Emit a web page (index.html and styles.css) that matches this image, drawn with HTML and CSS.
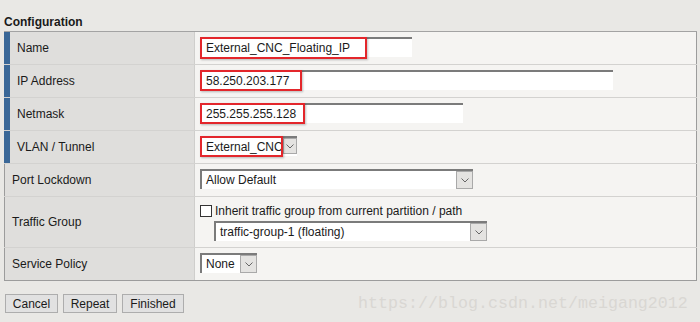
FILE: index.html
```
<!DOCTYPE html>
<html>
<head>
    <title>Configuration</title>
    <link rel="stylesheet" href="styles.css">
</head>
<body>
    <div class="title">Configuration</div>

    <div class="config">
        <div class="row req">
            <div class="label">Name</div>
            <div class="value">
                <div class="field w-name"><span class="hl hl-name">External_CNC_Floating_IP</span></div>
            </div>
        </div>
        <div class="row req">
            <div class="label">IP Address</div>
            <div class="value">
                <div class="field w-ip"><span class="hl hl-ip">58.250.203.177</span></div>
            </div>
        </div>
        <div class="row req">
            <div class="label">Netmask</div>
            <div class="value">
                <div class="field w-mask"><span class="hl hl-mask">255.255.255.128</span></div>
            </div>
        </div>
        <div class="row req">
            <div class="label">VLAN / Tunnel</div>
            <div class="value">
                <div class="select w-vlan">
                    <span class="hl hl-vlan">External_CNC</span>
                    <span class="arrow"><svg width="8" height="5" viewBox="0 0 8 5"><polyline points="0.5,0.5 4,4 7.5,0.5" fill="none" stroke="#666" stroke-width="1"/></svg></span>
                </div>
            </div>
        </div>
        <div class="row">
            <div class="label">Port Lockdown</div>
            <div class="value">
                <div class="select w-port">
                    <span class="text">Allow Default</span>
                    <span class="arrow"><svg width="8" height="5" viewBox="0 0 8 5"><polyline points="0.5,0.5 4,4 7.5,0.5" fill="none" stroke="#666" stroke-width="1"/></svg></span>
                </div>
            </div>
        </div>
        <div class="row tall">
            <div class="label">Traffic Group</div>
            <div class="value stack">
                <label class="check"><span class="box"></span>Inherit traffic group from current partition / path</label>
                <div class="select w-traffic">
                    <span class="text">traffic-group-1 (floating)</span>
                    <span class="arrow"><svg width="8" height="5" viewBox="0 0 8 5"><polyline points="0.5,0.5 4,4 7.5,0.5" fill="none" stroke="#666" stroke-width="1"/></svg></span>
                </div>
            </div>
        </div>
        <div class="row last">
            <div class="label">Service Policy</div>
            <div class="value">
                <div class="select w-policy">
                    <span class="text">None</span>
                    <span class="arrow"><svg width="8" height="5" viewBox="0 0 8 5"><polyline points="0.5,0.5 4,4 7.5,0.5" fill="none" stroke="#666" stroke-width="1"/></svg></span>
                </div>
            </div>
        </div>
    </div>

    <div class="buttons">
        <button class="w-cancel">Cancel</button>
        <button class="w-repeat">Repeat</button>
        <button class="w-finished">Finished</button>
    </div>

    <div class="watermark">https://blog.csdn.net/meigang2012</div>
</body>
</html>
```

FILE: styles.css
```
* {
    box-sizing: border-box;
}

body {
    font-family: "Liberation Sans", Arial, sans-serif;
    font-size: 12px;
    color: #1a1a1a;
    background-color: #e9e8e5;
    margin: 0;
    padding: 0;
    width: 700px;
    height: 322px;
    position: relative;
    overflow: hidden;
}

.title {
    font-weight: bold;
    padding: 15px 0 0 4px;
    height: 31px;
    line-height: 14px;
}

.config {
    margin-left: 4px;
    width: 693px;
    border-top: 1px solid #a3a3a3;
}

.row {
    display: flex;
    height: 33px;
    border-bottom: 1px solid #d3d2d0;
}

.row.tall {
    height: 51px;
}

.row.last {
    border-bottom: 1px solid #9c9c9c;
}

.label {
    width: 191px;
    display: flex;
    align-items: center;
    padding-left: 7px;
    background-color: #dfdedc;
    border-left: 1px solid #9c9c9c;
    border-right: 1px solid #cfcecc;
}

.req .label {
    border-left: 6px solid #3a6797;
}

.value {
    flex: 1;
    display: flex;
    align-items: flex-start;
    padding: 5px 0 0 5px;
    background-color: #f5f4f2;
    border-right: 1px solid #9c9c9c;
}

.value.stack {
    flex-direction: column;
    padding-top: 7px;
}

.field, .select {
    display: flex;
    align-items: center;
    height: 20px;
    background-color: #fff;
    border-top: 2px solid #7b7b7b;
    border-left: 2px solid #7b7b7b;
}

.field .hl {
    margin: -2px 0 0 -2px;
    align-self: flex-start;
}

.hl {
    display: inline-flex;
    align-items: center;
    height: 22px;
    padding: 0 0 0 4px;
    border: 2px solid #e3262b;
    box-shadow: 1px 1px 2px rgba(0, 0, 0, 0.25);
    white-space: nowrap;
    overflow: hidden;
    position: relative;
}

.hl-name { width: 167px; }
.hl-ip { width: 102px; height: 21px; }
.hl-mask { width: 105px; height: 21px; }

.select .text {
    flex: 1;
    padding-left: 4px;
    white-space: nowrap;
    overflow: hidden;
}

.select .hl-vlan {
    width: 84px;
    height: 21px;
    margin: -2px 0 -1px -2px;
    align-self: flex-start;
}

.arrow {
    width: 17px;
    height: 18px;
    display: flex;
    align-items: center;
    justify-content: center;
    background-color: #e4e3e1;
    border: 1px solid #a9a9a9;
    margin-left: auto;
}

.w-vlan .arrow {
    width: 14px;
    height: 16px;
    align-self: flex-start;
}

.w-name { width: 212px; }
.w-ip { width: 413px; }
.w-mask { width: 263px; }
.w-vlan { width: 97px; }
.w-port { width: 273px; }
.w-traffic { width: 273px; margin: 4px 0 0 14px; }
.w-policy { width: 57px; }

.check {
    display: flex;
    align-items: center;
    height: 13px;
    white-space: nowrap;
}

.check .box {
    width: 12px;
    height: 12px;
    margin-right: 3px;
    background-color: #fff;
    border: 1px solid #333;
}

.buttons {
    display: flex;
    gap: 5px;
    margin: 13px 0 0 5px;
}

.buttons button {
    font-family: "Liberation Sans", Arial, sans-serif;
    font-size: 12px;
    color: #1a1a1a;
    height: 19px;
    padding: 0;
    background-color: #e1e1e1;
    border: 1px solid #adadad;
    border-radius: 0;
}

.w-cancel { width: 53px; }
.w-repeat { width: 54px; }
.w-finished { width: 62px; }

.watermark {
    position: absolute;
    left: 358px;
    top: 295px;
    font-family: "Liberation Mono", monospace;
    font-size: 16.67px;
    line-height: 17px;
    color: #d9d7d3;
    white-space: nowrap;
}
```
